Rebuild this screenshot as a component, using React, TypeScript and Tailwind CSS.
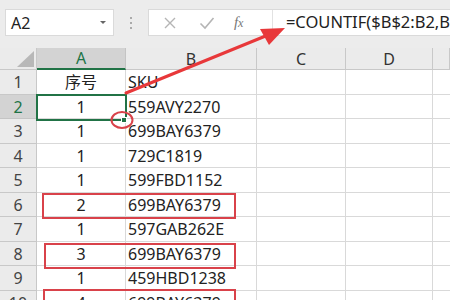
import React from "react";

const rows: { n: number; a: string; b: string }[] = [
  { n: 1, a: "序号", b: "SKU" },
  { n: 2, a: "1", b: "559AVY2270" },
  { n: 3, a: "1", b: "699BAY6379" },
  { n: 4, a: "1", b: "729C1819" },
  { n: 5, a: "1", b: "599FBD1152" },
  { n: 6, a: "2", b: "699BAY6379" },
  { n: 7, a: "1", b: "597GAB262E" },
  { n: 8, a: "3", b: "699BAY6379" },
  { n: 9, a: "1", b: "459HBD1238" },
  { n: 10, a: "4", b: "699BAY6379" },
];

const font = { fontFamily: '"Noto Sans", "Noto Sans CJK SC", sans-serif' };

function Row({ n, a, b }: { n: number; a: string; b: string }) {
  const h = n % 2 === 1 ? "h-[25px]" : "h-[24px]";
  const sel = n === 2;
  return (
    <>
      <div
        className={`${h} flex items-center justify-center border-b border-r text-[16px] ${
          sel
            ? "bg-[#d3d3d3] border-r-[#217346] border-b-[#c4c4c4] text-[#217346]"
            : "bg-[#ebebeb] border-[#c8c8c8] text-[#444]"
        }`}
      >
        {n}
      </div>
      <div className={`${h} flex items-center justify-center border-b border-r border-[#d9d9d9] text-[16px] text-[#222]`}>
        {a}
      </div>
      <div className={`${h} flex items-center pl-[2px] border-b border-r border-[#d9d9d9] text-[16px] text-[#222] overflow-hidden whitespace-nowrap`}>
        {b}
      </div>
      <div className={`${h} border-b border-r border-[#d9d9d9]`} />
      <div className={`${h} border-b border-r border-[#d9d9d9]`} />
      <div className={`${h} border-b border-[#d9d9d9]`} />
    </>
  );
}

export default function App() {
  return (
    <div className="relative w-[450px] h-[300px] overflow-hidden bg-white" style={font}>
      {/* formula bar */}
      <div className="h-[48px] bg-[#ececec] flex items-start pt-[9px]">
        <div className="ml-[5px] w-[111px] h-[27px] bg-white border border-[#dadada] flex items-center justify-between pl-[5px] pr-[7px]">
          <span className="text-[16px] text-[#222]">A2</span>
          <svg width="6" height="4" viewBox="0 0 6 4">
            <path d="M0 0 L6 0 L3 3 Z" fill="#666" />
          </svg>
        </div>
        <div className="w-[34px] h-[27px] flex flex-col items-center justify-center gap-[3px]">
          <span className="w-[2px] h-[2px] bg-[#aaa]" />
          <span className="w-[2px] h-[2px] bg-[#aaa]" />
          <span className="w-[2px] h-[2px] bg-[#aaa]" />
        </div>
        <div className="flex-1 h-[27px] bg-white border border-[#dadada] border-r-0 flex items-center">
          <div className="w-[123px] h-full flex items-center">
            <svg width="14" height="14" viewBox="0 0 14 14" className="ml-[14px]">
              <path d="M2 2 L12 12 M12 2 L2 12" stroke="#b5b5b5" strokeWidth="1.4" />
            </svg>
            <svg width="16" height="14" viewBox="0 0 16 14" className="ml-[22px]">
              <path d="M1.5 7.5 L6 12 L14.5 2" stroke="#b5b5b5" strokeWidth="1.6" fill="none" />
            </svg>
            <span
              className="ml-[19px] text-[15px] italic text-[#777]"
              style={{ fontFamily: '"Liberation Serif", serif' }}
            >
              f<span className="text-[12px]">x</span>
            </span>
          </div>
          <div className="h-full border-l border-[#e2e2e2] flex items-center pl-[13px] text-[16.5px] text-[#222] whitespace-nowrap">
            =COUNTIF($B$2:B2,B
          </div>
        </div>
      </div>

      {/* sheet grid */}
      <div className="grid grid-cols-[37px_89px_131px_89px_87px_1fr]">
        <div className="h-[22px] bg-[#ebebeb] border-r border-b border-[#c8c8c8] flex items-end justify-end pr-[2px] pb-[2px]">
          <svg width="17" height="16" viewBox="0 0 17 16">
            <path d="M17 0 L17 16 L0 16 Z" fill="#b8b8b8" />
          </svg>
        </div>
        <div className="h-[22px] bg-[#d3d3d3] border-r border-[#c4c4c4] border-b-2 border-b-[#217346] flex items-center justify-center text-[16px] text-[#217346]">
          A
        </div>
        {["B", "C", "D", ""].map((c, i) => (
          <div
            key={i}
            className="h-[22px] bg-[#ebebeb] border-r border-b border-[#c8c8c8] flex items-center justify-center text-[16px] text-[#333]"
          >
            {c}
          </div>
        ))}
        {rows.map((r) => (
          <Row key={r.n} {...r} />
        ))}
      </div>

      {/* active cell */}
      <div className="absolute left-[36px] top-[94px] w-[91px] h-[27px] border-2 border-[#217346]" />
      <div className="absolute left-[121px] top-[117px] w-[6px] h-[6px] bg-[#217346] border border-white" />

      {/* annotations */}
      <svg className="absolute inset-0 pointer-events-none" width="450" height="300" viewBox="0 0 450 300">
        <g fill="none" stroke="#d9424a" strokeWidth="2">
          <rect x="43" y="194" width="192" height="24" />
          <rect x="45" y="244" width="190" height="24" />
          <rect x="44" y="290" width="191" height="24" />
          <ellipse cx="122" cy="120" rx="10.5" ry="8" />
        </g>
        <line x1="126" y1="93" x2="268" y2="35" stroke="#e8383a" strokeWidth="3" strokeLinecap="round" />
        <path d="M285 28 L260 29 L269 45 Z" fill="#e8383a" />
      </svg>
    </div>
  );
}
